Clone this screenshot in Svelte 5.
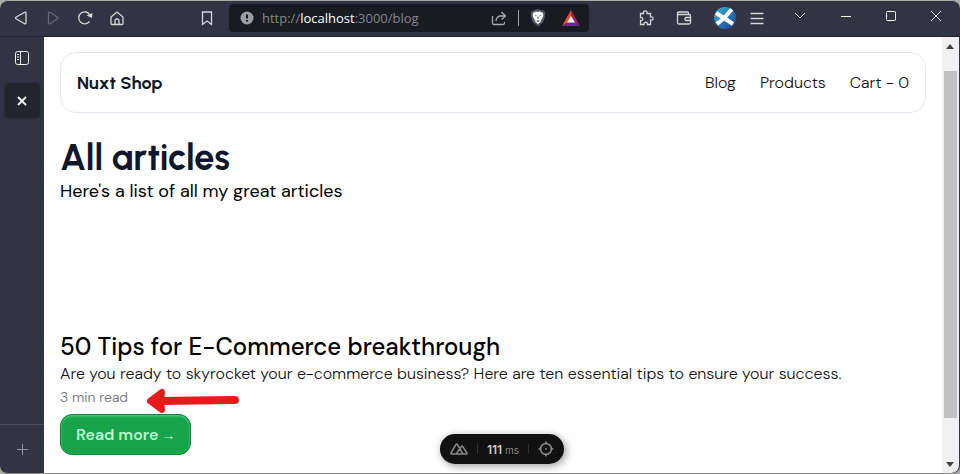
<script>
	const address = { scheme: 'http://', host: 'localhost', path: ':3000/blog' };

	const links = [
		{ label: 'Blog', href: '#blog' },
		{ label: 'Products', href: '#products' },
		{ label: 'Cart - 0', href: '#cart' }
	];

	const articles = [
		{
			title: '50 Tips for E-Commerce breakthrough',
			description: 'Are you ready to skyrocket your e-commerce business? Here are ten essential tips to ensure your success.',
			readTime: '3 min read'
		}
	];
</script>

<div class="window">
	<header class="toolbar">
		<button aria-label="Back">
			<svg width="16" height="16" viewBox="0 0 16 16"><path d="M13 3v10c0 .8-.8 1.1-1.4.7L3 8.700q-1-.7 0-1.400L11.600 2.300c.6-.4 1.400-.1 1.400.7z" /></svg>
		</button>
		<button class="dim" aria-label="Forward">
			<svg width="16" height="16" viewBox="0 0 16 16"><path d="M3.500 3v10c0 .8.8 1.100 1.400.7l7.600-5q1-.7 0-1.400L4.900 2.300c-.6-.4-1.400-.1-1.400.7z" /></svg>
		</button>
		<button aria-label="Reload">
			<svg width="16" height="16" viewBox="0 0 16 16"><path d="M12.500 11.500A6 6 0 1 1 13 5" /><path class="solid" d="M9.500 5.500l5.500 2.500.5-5z" /></svg>
		</button>
		<button aria-label="Home">
			<svg width="16" height="16" viewBox="0 0 16 16"><path d="M2 7v6.500q0 1 1 1h3v-4q0-1.500 2-1.500t2 1.500v4h3q1 0 1-1V7L8 2zM6 14.500h4" /></svg>
		</button>
		<button class="bookmark" aria-label="Bookmark">
			<svg width="16" height="16" viewBox="0 0 16 16"><path d="M3.500 2h9v12.500L8 11l-4.500 3.500z" /></svg>
		</button>

		<div class="address">
			<svg class="info" width="14" height="14" viewBox="0 0 14 14">
				<circle cx="7" cy="7" r="6.500" />
				<path d="M7 3.500v4M7 9v1.500" />
			</svg>
			<span class="url">{address.scheme}<b>{address.host}</b>{address.path}</span>
			<svg class="share" width="16" height="16" viewBox="0 0 16 16"><path d="M1.500 6v7q0 1.500 1.500 1.500h9q1.500 0 1.500-1.500v-1M10.500 2l4 4-4 3.500M14 6H10Q5.500 6 5 11" /></svg>
			<span class="bar"></span>
			<svg class="shield" width="16" height="18" viewBox="0 0 16 18">
				<path fill="#555866" d="M8 0l3 1 2 .5 2.500 2-.7 2 .2 2-2 6L8 17.500 3 13.500l-2-6 .2-2-.7-2L3 1.500 5 1z" />
				<path fill="#fff" d="M8 3l2-.6 3 1.600.3 3-1.300 3-1.500 1.500.5 1L8 15l-3-2.500.5-1L4 10 2.700 7 3 4l3-1.600z" />
				<path fill="#555866" d="M4.500 6l2.300.6-.7.9zM11.500 6l-2.300.6.7.9zM7.600 7.500h.8l.3 2-.7.6-.7-.6zM6 12l2-1 2 1-2 1z" />
			</svg>
			<svg class="bat" width="18" height="16" viewBox="0 0 18 16">
				<path fill="#ff4724" d="M9 0L0 16l6-3.500 3-6z" />
				<path fill="#9e1f63" d="M9 0l9 16-6-3.500-3-6z" />
				<path fill="#662d91" d="M0 16h18l-6-4H6z" />
				<path fill="#fff" d="M9 6l4 6.500H5z" />
			</svg>
		</div>

		<button class="puzzle" aria-label="Extensions">
			<svg width="16" height="16" viewBox="0 0 16 16"><path d="M2.500 3.500h3c-1-3.500 4.500-3.500 3.500 0h3.500V7c3.500-1 3.500 4 0 3v4.500H9.500c.5-3-4-3-3.500 0H2.500v-4c3 .5 3-3.500 0-3z" /></svg>
		</button>
		<button class="wallet" aria-label="Wallet">
			<svg width="16" height="16" viewBox="0 0 16 16"><path d="M12.500 4.500V3q0-1-1-1H3Q1.500 2 1.500 3.200q0 1.300 1.500 1.300h10q1.500 0 1.500 1.500v6.500q0 1.500-1.500 1.500H3q-1.500 0-1.500-1.500V3.500M14.500 7.500H10q-1 0-1 1v1q0 1 1 1h4.500" /></svg>
		</button>
		<button class="profile" aria-label="Profile">
			<svg width="22" height="22" viewBox="0 0 22 22">
				<defs>
					<linearGradient id="sky" x1="0" y1="0" x2="1" y2="1">
						<stop offset="0" stop-color="#39b7cf" />
						<stop offset="1" stop-color="#1b3e9b" />
					</linearGradient>
					<clipPath id="disc"><circle cx="11" cy="11" r="11" /></clipPath>
				</defs>
				<g clip-path="url(#disc)">
					<path fill="url(#sky)" stroke="none" d="M0 0h22v22H0z" />
					<path class="cross" d="M2 6l8 5 9 6M18 2l-7 8-8 7" />
				</g>
			</svg>
		</button>
		<button aria-label="Menu">
			<svg width="16" height="16" viewBox="0 0 16 16"><path d="M1.500 3.500h13M1.500 8.500h13M1.500 13.500h13" /></svg>
		</button>
		<button class="tabs" aria-label="Search tabs">
			<svg width="12" height="12" viewBox="0 0 12 12"><path d="M1 3l5 5 5-5" /></svg>
		</button>
		<button class="control" aria-label="Minimize">
			<svg width="12" height="12" viewBox="0 0 12 12"><path d="M1 6.500h10" /></svg>
		</button>
		<button class="control" aria-label="Maximize">
			<svg width="12" height="12" viewBox="0 0 12 12"><rect x="1.500" y="1.500" width="9" height="9" rx="1" /></svg>
		</button>
		<button class="control" aria-label="Close">
			<svg width="12" height="12" viewBox="0 0 12 12"><path d="M1 1l10 10M11 1L1 11" /></svg>
		</button>
	</header>

	<aside class="sidebar">
		<button aria-label="Toggle vertical tabs">
			<svg width="16" height="16" viewBox="0 0 16 16"><rect x="1.500" y="1.500" width="13" height="13" rx="2" /><path d="M6.500 1.500v13M3 4.500h2M3 7h2M3 9.500h2" /></svg>
		</button>
		<button class="tab" aria-label="Close tab">
			<svg width="10" height="10" viewBox="0 0 10 10"><path d="M1 1l8 8M9 1L1 9" /></svg>
		</button>
		<button class="new-tab" aria-label="New tab">
			<svg width="12" height="12" viewBox="0 0 12 12"><path d="M6.500 1v11M1 6.500h11" /></svg>
		</button>
	</aside>

	<div class="page">
		<nav>
			<a class="brand" href="#home">Nuxt Shop</a>
			{#each links as link}
				<a href={link.href}>{link.label}</a>
			{/each}
		</nav>

		<main>
			<h1>All articles</h1>
			<p class="intro">Here's a list of all my great articles</p>

			{#each articles as article}
				<article>
					<h2>{article.title}</h2>
					<p class="description">{article.description}</p>
					<div class="meta">
						<span>{article.readTime}</span>
						<svg class="arrow" width="94" height="26" viewBox="0 0 94 26">
							<path fill="#e61b1b" stroke="#e61b1b" stroke-width="6" stroke-linejoin="round" d="M4 13L16 4l-1 9 1 9z" />
							<path stroke="#e61b1b" stroke-width="8" stroke-linecap="round" d="M12 13l77-1" />
						</svg>
					</div>
					<button class="read-more">Read more <span class="glyph">→</span></button>
				</article>
			{/each}
		</main>

		<div class="devtools">
			<svg width="18" height="12" viewBox="0 0 18 12"><path d="M6 11H1.500q-1 0-.5-1l5-8.500q.7-1 1.400 0L13 11H6l5.500-7.500q.6-.8 1.200 0L17 10q.4 1-.5 1H12" /></svg>
			<span class="split"></span>
			<span class="time"><b>111</b> ms</span>
			<span class="split"></span>
			<svg width="16" height="16" viewBox="0 0 16 16"><circle cx="8" cy="8" r="5.500" /><path d="M8 .5v3M8 12.500v3M.5 8h3M12.500 8h3M7 8h2" /></svg>
		</div>
	</div>

	<div class="scrollbar">
		<svg width="8" height="5" viewBox="0 0 8 5"><path d="M0 5l4-5 4 5z" /></svg>
		<div class="thumb"></div>
		<svg width="8" height="5" viewBox="0 0 8 5"><path d="M0 0l4 5 4-5z" /></svg>
	</div>
</div>

<style>
	:global(body) {
		background: #a9aba9;
	}

	.window {
		display: grid;
		grid-template: 36px 1fr / 44px 1fr 18px;
		height: 100vh;
		box-sizing: border-box;
		overflow: hidden;
		border-top: 1px solid #a9aba9;
		border-bottom: 1px solid #8d8d8d;
		border-radius: 8px;
		background: #323443;
		font-family: "DM Sans", Inter, sans-serif;
	}

	button {
		display: flex;
		align-items: center;
		justify-content: center;
		padding: 0;
		border: 0;
		background: none;
		color: inherit;
		font: inherit;
	}

	svg {
		flex: none;
		fill: none;
		stroke: currentColor;
	}

	.toolbar {
		grid-column: 1 / -1;
		display: flex;
		align-items: center;
		box-sizing: border-box;
		padding: 0 2px 2px 5px;
		border-bottom: 1px solid #20222e;
		color: #d5d6da;
		stroke-width: 1.3;
	}

	.toolbar button {
		flex: none;
		width: 32px;
		height: 32px;
	}

	.toolbar .dim {
		color: #666876;
	}

	.toolbar .bookmark {
		margin: 0 6px 0 58px;
	}

	.toolbar .puzzle {
		margin: 0 6px 0 41px;
	}

	.toolbar .profile {
		margin-left: 9px;
	}

	.toolbar .tabs {
		margin: 0 7px 0 11px;
	}

	.toolbar .control {
		width: 45px;
	}

	.toolbar .tabs,
	.toolbar .control {
		padding-bottom: 4px;
		color: #fff;
		stroke-width: 1;
	}

	.solid {
		fill: currentColor;
		stroke: none;
	}

	.cross {
		stroke: #fff;
		stroke-width: 4;
	}

	.address {
		flex: 1;
		min-width: 0;
		display: flex;
		align-items: center;
		height: 28px;
		box-sizing: border-box;
		padding: 0 9px 0 11px;
		border-radius: 4px;
		background: #191b22;
	}

	.info {
		fill: #9b9da5;
		stroke: none;
	}

	.info path {
		stroke: #191b22;
		stroke-width: 2;
	}

	.url {
		flex: 1;
		margin-left: 8px;
		overflow: hidden;
		white-space: nowrap;
		color: #85878d;
		font: 13px "Open Sans", sans-serif;
	}

	.url b {
		color: #fff;
		font-weight: 400;
	}

	.share {
		color: #a9abb1;
	}

	.bar {
		width: 1px;
		height: 16px;
		margin: 0 11px;
		background: #a0a2a8;
	}

	.shield,
	.bat {
		stroke: none;
	}

	.bat {
		margin-left: 16px;
	}

	.sidebar {
		display: flex;
		flex-direction: column;
		align-items: center;
		padding-top: 3px;
		color: #f1f1f3;
	}

	.sidebar button {
		width: 35px;
		height: 35px;
	}

	.sidebar .tab {
		margin-top: 8px;
		border-radius: 4px;
		background: #22242e;
		box-shadow: 0 0 3px #22242e;
		stroke-width: 2;
	}

	.sidebar .new-tab {
		width: 100%;
		height: 49px;
		margin-top: auto;
		border-top: 1px solid #4b4d5b;
		color: #8f919b;
	}

	.page {
		position: relative;
		padding: 15px 16px 0;
		overflow: hidden;
		background: #fff;
	}

	nav {
		display: flex;
		align-items: center;
		gap: 24px;
		height: 61px;
		box-sizing: border-box;
		padding: 0 16px;
		border: 1px solid #e2e8f0;
		border-radius: 16px;
		font-size: 16px;
		font-weight: 300;
	}

	nav a {
		color: #111;
		text-decoration: none;
	}

	nav .brand {
		margin-right: auto;
		color: #0f172a;
		font: 700 18px Urbanist, Lato, sans-serif;
	}

	h1,
	h2,
	p {
		margin: 0;
	}

	h1 {
		margin-top: 25px;
		color: #0f172a;
		font: 700 36px/40px Urbanist, Lato, sans-serif;
	}

	.intro {
		color: #000;
		font-size: 18px;
		line-height: 26px;
	}

	article {
		margin-top: 128px;
	}

	h2 {
		color: #000;
		font-size: 24px;
		font-weight: 500;
		line-height: 30px;
	}

	.description {
		color: #111;
		font-size: 16px;
		font-weight: 300;
		line-height: 24px;
	}

	.meta {
		display: flex;
		align-items: flex-start;
		gap: 18px;
		color: #6b7280;
		font-size: 14px;
		font-weight: 300;
		line-height: 22px;
	}

	.arrow {
		margin-top: 2px;
	}

	.read-more {
		gap: 3px;
		height: 41px;
		padding: 0 15px;
		border: 1px solid #15803d;
		border-radius: 12px;
		background: #16a34a;
		box-shadow: inset 0 1px 3px #4ade80;
		color: #bbf7d0;
		font-size: 16px;
		font-weight: 600;
	}

	.glyph {
		font: 14px "Liberation Sans", sans-serif;
	}

	.devtools {
		position: absolute;
		bottom: 9px;
		left: calc(50% + 9px);
		display: flex;
		align-items: center;
		gap: 9px;
		height: 30px;
		padding: 0 10px;
		border-radius: 15px;
		background: #111;
		box-shadow: 2px 2px 8px #0006;
		color: #888;
		font-size: 10px;
		stroke-width: 1.5;
		transform: translateX(-50%);
	}

	.time {
		white-space: nowrap;
		font-family: Inter, sans-serif;
	}

	.time b {
		color: #ccc;
		font-size: 12px;
		font-weight: 600;
	}

	.split {
		width: 1px;
		height: 10px;
		background: #333;
	}

	.scrollbar {
		display: flex;
		flex-direction: column;
		align-items: center;
		padding: 7px 1px 6px 0;
		border-right: 1px solid #323443;
		border-radius: 0 0 8px 0;
		background: #f0f0f0;
	}

	.scrollbar svg {
		fill: #444;
		stroke: none;
	}

	.thumb {
		width: 13px;
		height: 82%;
		margin: 22px 0 auto;
		background: #c1c1c1;
	}
</style>
